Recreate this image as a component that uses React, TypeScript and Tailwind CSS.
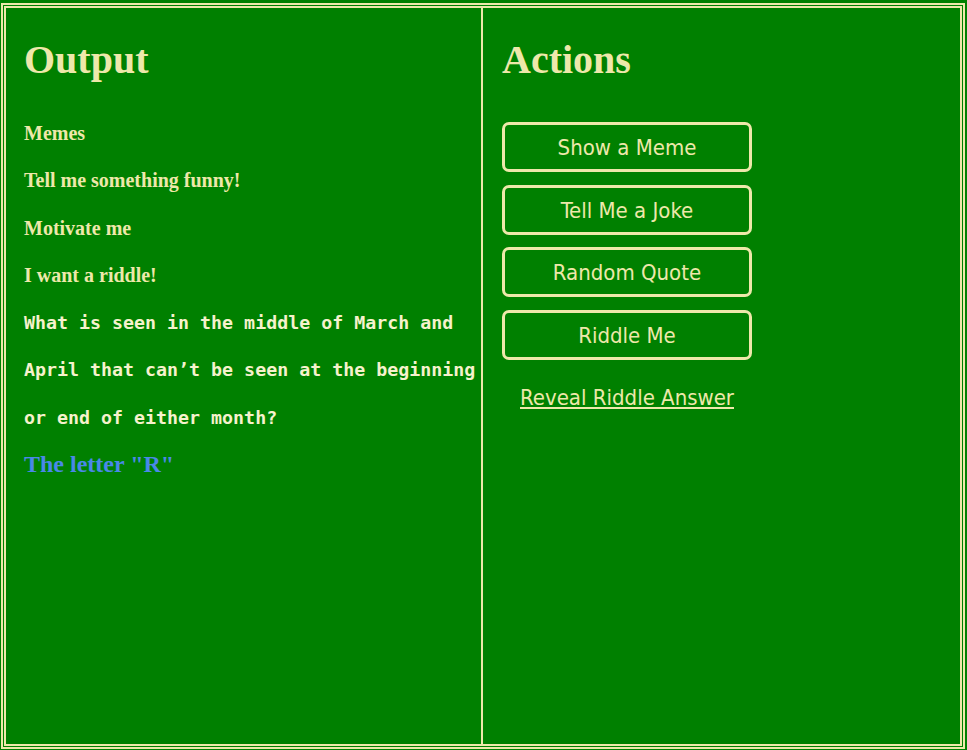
import { useState } from "react";

const SERIF = "font-['Liberation_Serif','Times_New_Roman',serif]";
const SANS = "font-['DejaVu_Sans_Condensed','Liberation_Sans',Tahoma,sans-serif]";

const ACTIONS = ["Show a Meme", "Tell Me a Joke", "Random Quote", "Riddle Me"];

const PROMPTS = ["Memes", "Tell me something funny!", "Motivate me", "I want a riddle!"];

export default function App() {
  const [showAnswer, setShowAnswer] = useState(true);

  return (
    <div className="h-[750px] bg-[#008000] pl-px pt-[3px] text-[#eee8aa]">
      <div className="h-[746px] w-[964px] border-2 border-[#eee8aa] p-px">
        <div className="grid h-full grid-cols-2 border-2 border-[#eee8aa]">
          <section className="border-r-2 border-[#eee8aa] pl-[18px] pr-1 pt-[32px]">
            <h1 className={`${SERIF} text-[40px] font-bold leading-[40px]`}>Output</h1>
            <div className="mt-[30px]">
              {PROMPTS.map((p) => (
                <p key={p} className={`${SERIF} text-[20px] font-bold leading-[47.3px]`}>
                  {p}
                </p>
              ))}
              <p className="font-['DejaVu_Sans_Mono',Consolas,monospace] text-[18.3px] font-bold leading-[47.3px] text-[#f6f2cc]">
                What is seen in the middle of March and April that can’t be seen at the beginning or end of either month?
              </p>
              {showAnswer && (
                <p className={`${SERIF} text-[24px] font-bold leading-[47.3px] text-[#4a88e8]`}>
                  The letter "R"
                </p>
              )}
            </div>
          </section>

          <section className="pl-[19px] pt-[32px]">
            <h1 className={`${SERIF} text-[40px] font-bold leading-[40px]`}>Actions</h1>
            <div className="mt-[42px] flex w-[250px] flex-col gap-[12.5px]">
              {ACTIONS.map((a) => (
                <button
                  key={a}
                  type="button"
                  className={`${SANS} h-[50px] w-[250px] rounded-[7px] border-[3px] border-[#eee8aa] pt-[2px] text-[22px] leading-none`}
                >
                  {a}
                </button>
              ))}
            </div>
            <button
              type="button"
              onClick={() => setShowAnswer((v) => !v)}
              className={`${SANS} mt-[24.5px] block w-[250px] text-center text-[22px] leading-[28px] underline`}
            >
              Reveal Riddle Answer
            </button>
          </section>
        </div>
      </div>
    </div>
  );
}
